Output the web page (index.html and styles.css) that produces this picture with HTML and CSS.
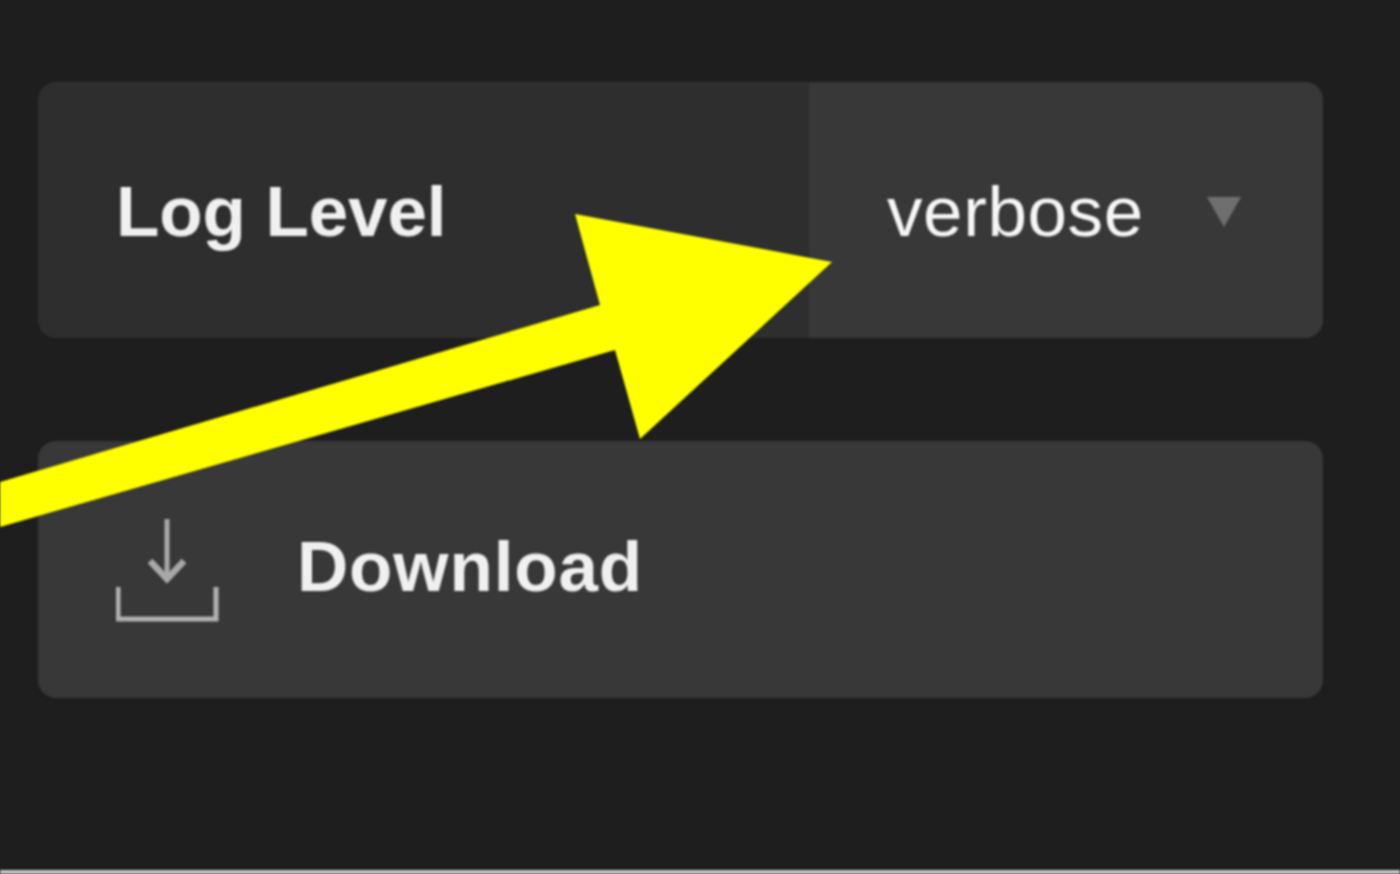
FILE: index.html
```html
<!DOCTYPE html>
<html lang="en">
  <head>
    <meta charset="UTF-8" />
    <title>Log Level</title>
    <link rel="stylesheet" href="styles.css">
  </head>
  <body>
    <div class="panel">
      <div class="row level-row">
        <div class="row-label">Log Level</div>
        <div class="select">
          <span class="select-value">verbose</span>
          <span class="select-caret"></span>
        </div>
      </div>

      <button class="row download-row" type="button">
        <svg class="download-icon" width="104" height="106" viewBox="0 0 104 106">
          <path d="M51 2 V60" fill="none" stroke="#a8a8a8" stroke-width="5" />
          <path d="M34 44 L51 62 L68 44" fill="none" stroke="#a8a8a8" stroke-width="6.5" />
          <path d="M2 70 V102 H100 V70" fill="none" stroke="#b0b0b0" stroke-width="5" />
        </svg>
        <span class="row-label">Download</span>
      </button>
    </div>

    <div class="bottom-line"></div>

    <!-- annotation on top of the screenshot -->
    <svg class="annotation" width="1400" height="874" viewBox="0 0 1400 874">
      <polygon points="832,262 575,214 600,305 0,482 0,527 615,350 640,439" fill="#ffff00" />
    </svg>
  </body>
</html>
```

FILE: styles.css
```css
html,
body {
  height: 100%;
}
body {
  margin: 0;
  background: #1e1e1e;
  display: flex;
  flex-direction: column;
  font-family: "Liberation Sans", Arial, sans-serif;
  font-size: 71px;
  overflow: hidden;
  /* the reference is an upscaled capture, everything is a bit soft */
  filter: blur(0.8px);
}
.panel {
  flex: 1;
  padding: 82px 77px 0 38px;
  display: flex;
  flex-direction: column;
  gap: 103px;
}
.row {
  height: 257px;
  border-radius: 18px;
  display: flex;
  align-items: center;
  overflow: hidden;
}
.level-row {
  background: #2e2e2e;
  height: 256px;
}
.level-row > .row-label {
  flex: 1;
  padding: 2px 0 0 78px;
  letter-spacing: -0.1px;
}
.row-label {
  font-weight: bold;
  color: #f0f0f0;
}
.select {
  width: 514px;
  height: 100%;
  box-sizing: border-box;
  padding: 2px 0 0 78px;
  background: #383838;
  display: flex;
  align-items: center;
  gap: 63px;
  color: #f6f6f6;
  letter-spacing: 0.6px;
}
.select-caret {
  width: 0;
  height: 0;
  margin-top: 2px;
  border-left: 17px solid transparent;
  border-right: 17px solid transparent;
  border-top: 30px solid #6f6f6f;
}
.download-row {
  width: 100%;
  border: none;
  padding: 0 0 0 78px;
  background: #383838;
  font: inherit;
  gap: 77px;
}
.download-row .row-label {
  padding-bottom: 6px;
  letter-spacing: 0.85px;
}
.download-icon {
  flex: none;
}
.bottom-line {
  height: 4px;
  background: #c8c8c8;
}
.annotation {
  position: absolute;
  left: 0;
  top: 0;
}
```
